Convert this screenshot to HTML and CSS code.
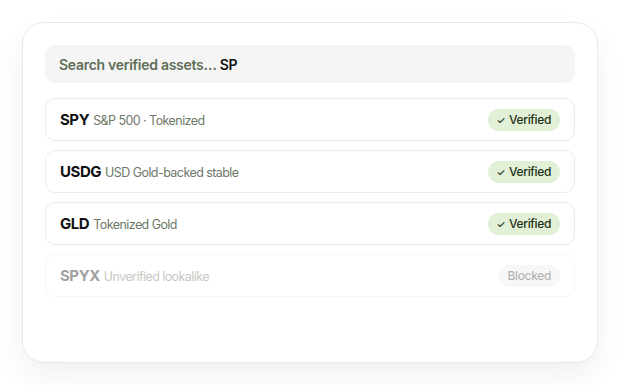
FILE: index.html
```html
<!DOCTYPE html>
<html>
<head>
<meta charset="utf-8">
<link rel="stylesheet" href="styles.css">
</head>
<body>
<div class="card">
  <div class="search"><span class="ph">Search verified assets…&nbsp;</span><span class="q">SP</span></div>
  <div class="list">
    <div class="row">
      <div class="name"><span class="tk">SPY</span><span class="desc">S&amp;P 500 · Tokenized</span></div>
      <span class="badge"><span class="ck">✓</span>Verified</span>
    </div>
    <div class="row">
      <div class="name"><span class="tk">USDG</span><span class="desc">USD Gold-backed stable</span></div>
      <span class="badge"><span class="ck">✓</span>Verified</span>
    </div>
    <div class="row">
      <div class="name"><span class="tk">GLD</span><span class="desc">Tokenized Gold</span></div>
      <span class="badge"><span class="ck">✓</span>Verified</span>
    </div>
    <div class="row blocked">
      <div class="name"><span class="tk">SPYX</span><span class="desc">Unverified lookalike</span></div>
      <span class="badge grey">Blocked</span>
    </div>
  </div>
</div>
</body>
</html>
```

FILE: styles.css
```css
* { box-sizing: border-box; }
html, body { margin: 0; background: #fff; }
body {
  padding: 22px 22px;
  font-family: Inter, "Noto Sans", sans-serif;
}
.card {
  width: 576px;
  height: 341px;
  border: 1px solid #e9e9e9;
  border-radius: 22px;
  background: #fff;
  padding: 22px;
  box-shadow: 0 14px 30px rgba(0,0,0,0.06);
}
.search {
  height: 38px;
  background: #f5f5f5;
  border-radius: 10px;
  padding: 0 14px;
  display: flex;
  align-items: center;
  font-size: 14px;
  font-weight: 600;
  letter-spacing: -0.02em;
}
.ph { color: #5f6e57; }
.q { color: #111; }
.list {
  margin-top: 15px;
  display: flex;
  flex-direction: column;
  gap: 9px;
}
.row {
  height: 43px;
  border: 1px solid #ececec;
  border-radius: 10px;
  display: flex;
  align-items: center;
  justify-content: space-between;
  padding: 0 14px 0 14px;
}
.name { display: flex; align-items: baseline; gap: 4px; }
.tk { font-size: 15px; font-weight: 700; color: #111; letter-spacing: -0.03em; }
.desc { font-size: 12.5px; color: #6e7868; letter-spacing: -0.045em; }
.badge {
  height: 22px;
  padding: 0 9px;
  border-radius: 11px;
  background: #e2f0d8;
  color: #1d3317;
  font-size: 12px;
  font-weight: 500;
  letter-spacing: -0.03em;
  display: flex;
  align-items: center;
}
.ck { font-size: 10px; margin-right: 4px; }
.blocked { opacity: 0.4; }
.badge.grey { background: #ececec; color: #444; }
```
